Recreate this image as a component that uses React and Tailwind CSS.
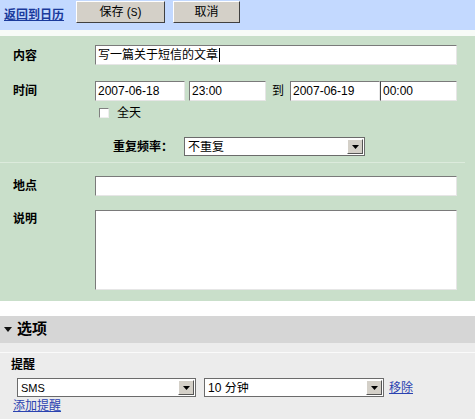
const FONT = { fontFamily: '"Liberation Sans", "Noto Sans CJK SC", sans-serif' };

function Field({ className = "", children }) {
  return (
    <div
      className={`h-[20px] bg-white border border-t-[#7a7a7a] border-l-[#7a7a7a] border-r-[#e6e6e6] border-b-[#e6e6e6] px-[2px] flex items-center text-[12px] text-black leading-none ${className}`}>
      {children}
    </div>
  );
}

function Select({ className = "", value }) {
  return (
    <div
      className={`h-[19px] bg-white border border-[#6b6b6b] flex items-center text-[12px] text-black leading-none ${className}`}>
      <span className="flex-1 px-[3px] truncate">{value}</span>
      <span className="w-[16px] h-[15px] mr-[1px] bg-[#d4d0c8] border border-t-white border-l-white border-r-[#555] border-b-[#555] flex items-center justify-center">
        <svg width="7" height="4" viewBox="0 0 7 4">
          <path d="M0 0h7L3.5 4z" fill="#000" />
        </svg>
      </span>
    </div>
  );
}

function Label({ children }) {
  return (
    <div className="w-[95px] pl-[13px] text-[12px] font-bold text-black shrink-0">
      {children}
    </div>
  );
}

export default function App() {
  return (
    <div className="w-[475px] h-[419px] bg-white overflow-hidden" style={FONT}>
      {/* 顶部工具条 */}
      <div className="h-[30px] bg-[#c3d9ff] flex items-start pt-[1px] pl-[4px]">
        <a className="mt-[5px] text-[12px] font-bold text-[#1a3a9c] underline w-[72px]">
          返回到日历
        </a>
        <button className="w-[89px] h-[22px] bg-[#d4d0c8] border border-t-white border-l-white border-r-[#404040] border-b-[#404040] text-[12px] text-black">
          保存 (<span className="text-[10px]">S</span>)
        </button>
        <button className="ml-[8px] w-[67px] h-[22px] bg-[#d4d0c8] border border-t-white border-l-white border-r-[#404040] border-b-[#404040] text-[12px] text-black">
          取消
        </button>
      </div>

      <div className="h-[6px] bg-[#f7fbf7]" />

      {/* 绿色表单区 */}
      <div className="h-[265px] bg-[#c9dfca] pt-[9px] pr-[18px]">
        <div className="flex items-start">
          <Label>
            <span className="block mt-[2px]">内容</span>
          </Label>
          <Field className="flex-1 h-[18px]">
            写一篇关于短信的文章<span className="w-px h-[14px] bg-black ml-px" />
          </Field>
        </div>

        <div className="flex items-start mt-[16px]">
          <Label>
            <span className="block mt-[1px]">时间</span>
          </Label>
          <div className="flex-1">
            <div className="flex items-center">
              <Field className="w-[90px]">2007-06-18</Field>
              <Field className="ml-[4px] w-[77px]">23:00</Field>
              <span className="w-[24px] text-center text-[12px]">到</span>
              <Field className="w-[90px]">2007-06-19</Field>
              <Field className="flex-1 border-l-[#444]">00:00</Field>
            </div>
            <div className="flex items-center mt-[3px] pl-[4px] text-[12px]">
              <span className="w-[10px] h-[10px] bg-white border border-t-[#808080] border-l-[#808080] border-r-[#eee] border-b-[#eee]" />
              <span className="ml-[8px]">全天</span>
            </div>
          </div>
        </div>

        <div className="flex items-center mt-[15px] pl-[113px]">
          <span className="text-[12px] font-bold w-[71px]">重复频率：</span>
          <Select className="w-[181px]" value="不重复" />
        </div>

        <div className="mt-[6px] h-px bg-[#dcebdc] mr-[-8px]" />

        <div className="flex items-start mt-[13px]">
          <Label>
            <span className="block mt-[1px]">地点</span>
          </Label>
          <Field className="flex-1" />
        </div>

        <div className="flex items-start mt-[14px]">
          <Label>说明</Label>
          <Field className="flex-1 h-[80px]" />
        </div>
      </div>

      <div className="h-[15px] bg-white" />

      {/* 选项 */}
      <div className="h-[27px] bg-[#d6d6d6] flex items-center pl-[4px]">
        <svg width="8" height="5" viewBox="0 0 8 5">
          <path d="M0 0h8L4 5z" fill="#111" />
        </svg>
        <span className="ml-[5px] text-[15px] font-bold text-black">选项</span>
      </div>
      <div className="h-[77px] bg-[#ececec]">
        <div className="h-[9px]" />
        <div className="h-px bg-[#fafafa]" />
        <div className="pl-[11px] pt-[3px] text-[12px] font-bold">提醒</div>
        <div className="flex items-center mt-[4px] pl-[17px]">
          <Select className="w-[179px]" value={<span className="text-[11px]">SMS</span>} />
          <Select className="ml-[8px] w-[180px]" value="10 分钟" />
          <a className="ml-[5px] text-[12px] text-[#2a42b0] underline">移除</a>
        </div>
        <a className="block pl-[13px] text-[12px] text-[#2a42b0] underline">添加提醒</a>
      </div>
    </div>
  );
}
